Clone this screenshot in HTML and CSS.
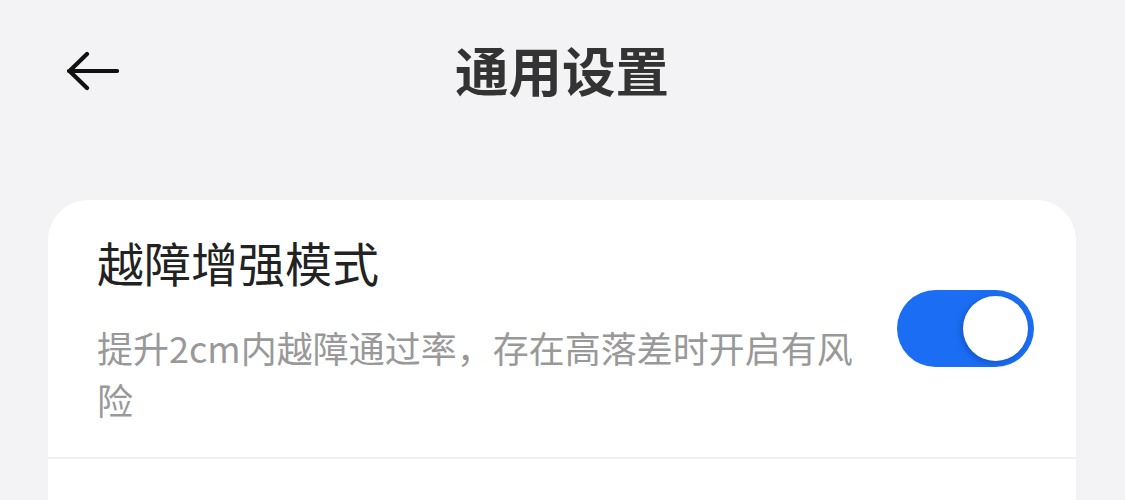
FILE: index.html
```html
<!DOCTYPE html>
<html lang="zh-CN">
<head>
<meta charset="utf-8">
<link rel="stylesheet" href="styles.css">
</head>
<body>
<div class="page">
  <header class="header">
    <button class="back" aria-label="返回">
      <svg width="52" height="40" viewBox="0 0 52 40"><path d="M2 20 H50 M20 3 L2.5 20 L20 37" fill="none" stroke="#111" stroke-width="4.2" stroke-linecap="round" stroke-linejoin="round"/></svg>
    </button>
    <h1 class="title">通用设置</h1>
  </header>
  <section class="card">
    <div class="row">
      <div class="text">
        <div class="row-title">越障增强模式</div>
        <div class="row-desc">提升2cm内越障通过率，存在高落差时开启有风险</div>
      </div>
      <div class="switch on"><div class="knob"></div></div>
    </div>
    <div class="divider"></div>
    <div class="row next"></div>
  </section>
</div>
</body>
</html>
```
FILE: styles.css
```css
html, body {
  margin: 0;
  padding: 0;
  background: #f3f3f5;
  font-family: "Noto Sans CJK SC", "Noto Sans", sans-serif;
}
.page {
  width: 1125px;
  height: 500px;
  overflow: hidden;
  padding: 0 49px 0 48px;
  box-sizing: border-box;
}
.header {
  position: relative;
  height: 140px;
  display: flex;
  align-items: center;
  justify-content: center;
}
.back {
  position: absolute;
  left: 19px;
  top: 51px;
  border: 0;
  background: none;
  padding: 0;
  display: flex;
}
.title {
  margin: 0;
  font-size: 53.5px;
  font-weight: 700;
  color: #333;
  line-height: 1;
  transform: translateY(-1px);
}
.card {
  margin-top: 60px;
  background: #fff;
  border-radius: 40px 40px 0 0;
  height: 400px;
}
.row {
  display: flex;
  align-items: center;
  padding: 26px 42px 32px 49px;
}
.text {
  width: 770px;
}
.row-title {
  font-size: 47px;
  line-height: 72px;
  color: #222;
}
.row-desc {
  margin-top: 23px;
  font-size: 36px;
  line-height: 52px;
  color: #999;
  width: 770px;
}
.switch {
  margin-left: auto;
  margin-top: 6px;
  width: 137px;
  height: 77px;
  border-radius: 39px;
  background: #1b6ef3;
  position: relative;
  flex: none;
}
.knob {
  position: absolute;
  right: 6px;
  top: 6px;
  width: 65px;
  height: 65px;
  border-radius: 50%;
  background: #fff;
  box-shadow: -2px 2px 6px rgba(0, 40, 120, 0.35);
}
.divider {
  height: 2px;
  background: #f0f0f2;
}
```
